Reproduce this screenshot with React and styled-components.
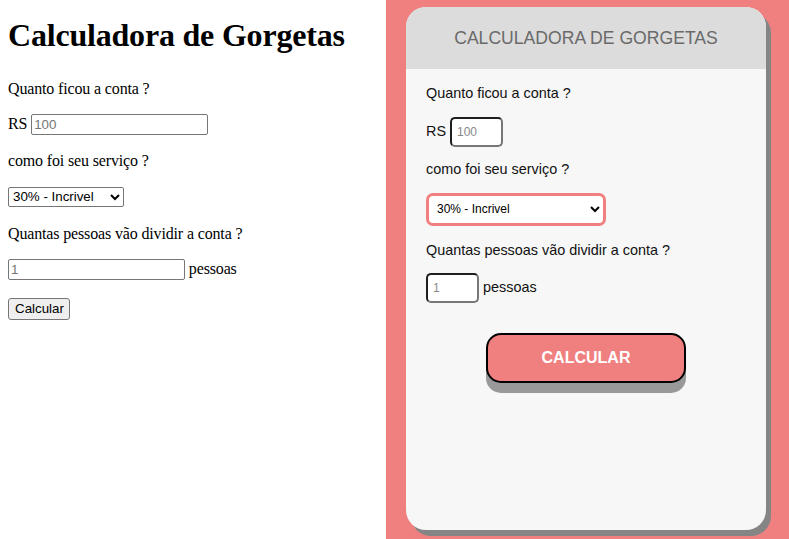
import React from 'react';
import styled, { createGlobalStyle } from 'styled-components';

const GlobalStyle = createGlobalStyle`
  html, body {
    margin: 0;
    padding: 0;
    height: 100%;
  }
  body {
    font-family: "Liberation Serif", "Times New Roman", serif;
    font-size: 16px;
  }
  #root {
    height: 100%;
  }
`;

const Page = styled.div`
  display: flex;
  height: 100vh;
  overflow: hidden;
`;

/* ---- versão sem estilo (esquerda) ---- */

const PlainSide = styled.section`
  flex: 0 0 386px;
  box-sizing: border-box;
  padding: 0 8px;
  background: #fff;
  color: #000;
`;

const PlainTitle = styled.h1`
  font-size: 32px;
  font-weight: bold;
  margin: 17px 0 25px;
  line-height: 37px;
  letter-spacing: -0.2px;
`;

const PlainText = styled.p`
  margin: 16px 0;
  line-height: 19px;
  letter-spacing: -0.15px;
`;

const PlainInput = styled.input`
  box-sizing: border-box;
  width: 177px;
  height: 21px;
  padding: 1px 2px;
  border: 1px solid #767676;
  border-radius: 2px;
  font-family: "Liberation Sans", Arial, sans-serif;
  font-size: 13.33px;
  vertical-align: baseline;
  &::placeholder {
    color: #757575;
  }
`;

const PlainSelect = styled.select`
  box-sizing: border-box;
  width: 116px;
  height: 20px;
  margin: 0 0 1px;
  font-family: "Liberation Sans", Arial, sans-serif;
  font-size: 13.33px;
  color: #000;
  border: 1px solid #767676;
  border-radius: 2px;
  background: #fff;
`;

const PlainButton = styled.button`
  box-sizing: border-box;
  width: 62px;
  height: 22px;
  margin-top: 2px;
  padding: 1px 6px;
  font-family: "Liberation Sans", Arial, sans-serif;
  font-size: 13.33px;
  color: #000;
  background: #efefef;
  border: 1px solid #767676;
  border-radius: 3px;
`;

/* ---- versão estilizada (direita) ---- */

const StyledSide = styled.section`
  flex: 1;
  box-sizing: border-box;
  padding: 7px 23px 9px 20px;
  background: #f08080;
  display: flex;
`;

const Card = styled.div`
  flex: 1;
  display: flex;
  flex-direction: column;
  background: #f7f7f7;
  border-radius: 20px;
  overflow: hidden;
  box-shadow: 5px 6px 0 #858585;
  font-family: "Liberation Sans", Arial, sans-serif;
`;

const CardHeader = styled.header`
  height: 62px;
  flex: 0 0 62px;
  display: flex;
  align-items: center;
  justify-content: center;
  background: #dcdcdc;
  color: #6a6a6a;
  font-size: 17.6px;
`;

const CardBody = styled.div`
  padding: 2px 20px 0;
  font-size: 14.4px;
  color: #111;
`;

const Field = styled.p`
  margin: 14.4px 0;
  line-height: 17px;
`;

const CardInput = styled.input`
  box-sizing: border-box;
  width: 53px;
  height: 30px;
  padding: 0 5px;
  border: 2px solid;
  border-color: #1f1f1f #777 #777 #1f1f1f;
  border-radius: 5px;
  background: #fff;
  font-family: "Liberation Sans", Arial, sans-serif;
  font-size: 12px;
  vertical-align: baseline;
  margin-right: ${({ $gap }) => $gap || 0}px;
  &::placeholder {
    color: #888;
  }
`;

const CardSelect = styled.select`
  box-sizing: border-box;
  width: 180px;
  height: 33px;
  margin: 0 0 2px;
  padding: 0 4px;
  vertical-align: middle;
  border: 3px solid #f08080;
  border-radius: 7px;
  background: #fff;
  color: #000;
  font-family: "Liberation Sans", Arial, sans-serif;
  font-size: 12px;
`;

const ButtonRow = styled.div`
  display: flex;
  justify-content: center;
  margin-top: 30px;
`;

const CalcButton = styled.button`
  box-sizing: border-box;
  width: 200px;
  height: 50px;
  background: #f08080;
  color: #fff;
  border: 2px solid #000;
  border-radius: 15px;
  box-shadow: 0 10px 0 #999;
  font-family: "Liberation Sans", Arial, sans-serif;
  font-size: 16px;
  font-weight: bold;
  padding: 0;
  cursor: pointer;
`;

function App() {
  return (
    <>
      <GlobalStyle />
      <Page>
        <PlainSide>
          <PlainTitle>Calculadora de Gorgetas</PlainTitle>
          <PlainText>Quanto ficou a conta ?</PlainText>
          <PlainText>
            RS <PlainInput type="text" placeholder="100" />
          </PlainText>
          <PlainText>como foi seu serviço ?</PlainText>
          <PlainText>
            <PlainSelect defaultValue="0.3">
              <option value="0.3">30% - Incrivel</option>
              <option value="0.2">20% - Bom</option>
              <option value="0.15">15% - Razoável</option>
              <option value="0.1">10% - Ruim</option>
            </PlainSelect>
          </PlainText>
          <PlainText>Quantas pessoas vão dividir a conta ?</PlainText>
          <PlainText>
            <PlainInput type="text" placeholder="1" /> pessoas
          </PlainText>
          <PlainButton type="button">Calcular</PlainButton>
        </PlainSide>

        <StyledSide>
          <Card>
            <CardHeader>CALCULADORA DE GORGETAS</CardHeader>
            <CardBody>
              <Field>Quanto ficou a conta ?</Field>
              <Field>
                RS <CardInput type="text" placeholder="100" />
              </Field>
              <Field>como foi seu serviço ?</Field>
              <Field>
                <CardSelect defaultValue="0.3">
                  <option value="0.3">30% - Incrivel</option>
                  <option value="0.2">20% - Bom</option>
                  <option value="0.15">15% - Razoável</option>
                  <option value="0.1">10% - Ruim</option>
                </CardSelect>
              </Field>
              <Field>Quantas pessoas vão dividir a conta ?</Field>
              <Field>
                <CardInput type="text" placeholder="1" $gap={4} />pessoas
              </Field>
              <ButtonRow>
                <CalcButton type="button">CALCULAR</CalcButton>
              </ButtonRow>
            </CardBody>
          </Card>
        </StyledSide>
      </Page>
    </>
  );
}

export default App;
